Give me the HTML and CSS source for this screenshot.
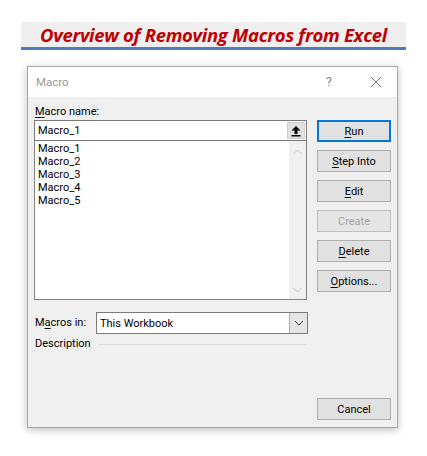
FILE: index.html
```html
<!DOCTYPE html>
<html>
<head>
<meta charset="utf-8">
<link rel="stylesheet" href="styles.css">
</head>
<body>
<div class="banner"><span class="banner-text">Overview of Removing Macros from Excel</span></div>
<div class="dialog">
  <div class="titlebar">
    <span class="title">Macro</span>
    <span class="help">?</span>
    <svg class="close" width="12" height="12" viewBox="0 0 12 12"><path d="M1 1L11 11M11 1L1 11" stroke="#777" stroke-width="1" fill="none"/></svg>
  </div>
  <div class="body">
    <div class="main">
      <div class="leftcol">
        <div class="label"><u>M</u>acro name:</div>
        <div class="input">
          <span class="input-text">Macro_1</span>
          <span class="upbtn"><svg width="12" height="12" viewBox="0 0 12 12"><path d="M6 1L10.5 5.5H7.5V9H4.5V5.5H1.5Z" fill="#000"/><rect x="1.5" y="10" width="9" height="1.5" fill="#000"/></svg></span>
        </div>
        <div class="list">
          <div class="items">
            <div class="item">Macro_1</div>
            <div class="item">Macro_2</div>
            <div class="item">Macro_3</div>
            <div class="item">Macro_4</div>
            <div class="item">Macro_5</div>
          </div>
          <div class="scroll">
            <svg width="9" height="6" viewBox="0 0 9 6"><path d="M0.5 5L4.5 1L8.5 5" stroke="#c2c2c2" fill="none"/></svg>
            <svg width="9" height="6" viewBox="0 0 9 6"><path d="M0.5 1L4.5 5L8.5 1" stroke="#c2c2c2" fill="none"/></svg>
          </div>
        </div>
      </div>
      <div class="buttons">
        <div class="btn primary"><u>R</u>un</div>
        <div class="btn"><u>S</u>tep Into</div>
        <div class="btn"><u>E</u>dit</div>
        <div class="btn disabled">Create</div>
        <div class="btn"><u>D</u>elete</div>
        <div class="btn"><u>O</u>ptions...</div>
      </div>
    </div>
    <div class="macros-row">
      <span class="label">M<u>a</u>cros in:</span>
      <div class="combo">
        <span class="combo-text">This Workbook</span>
        <span class="combo-btn"><svg width="10" height="6" viewBox="0 0 10 6"><path d="M1 1L5 5L9 1" stroke="#333" fill="none"/></svg></span>
      </div>
    </div>
    <div class="desc-row">
      <span class="label">Description</span>
      <span class="rule"></span>
    </div>
    <div class="spacer"></div>
    <div class="footer">
      <div class="btn">Cancel</div>
    </div>
  </div>
</div>
</body>
</html>
```
FILE: styles.css
```css
html, body {
  margin: 0;
  padding: 0;
  background: #fff;
}
body {
  width: 427px;
  height: 456px;
  font-family: Roboto, "Noto Sans", sans-serif;
  font-size: 11px;
  color: #000;
}
.banner {
  margin: 22px 0 0 21px;
  width: 385px;
  height: 25px;
  background: #efefef;
  border-bottom: 3px solid #4f7bbf;
  display: flex;
  align-items: center;
  justify-content: center;
}
.banner-text {
  font-family: "Open Sans", sans-serif;
  font-weight: bold;
  font-style: italic;
  font-size: 18.5px;
  color: #c00000;
  letter-spacing: -0.3px;
}
.dialog {
  margin: 16px 0 0 27px;
  width: 369px;
  height: 360px;
  border: 1px solid #a6a6a6;
  background: #f0f0f0;
  box-shadow: 0 2px 8px rgba(0,0,0,0.25);
  display: flex;
  flex-direction: column;
}
.titlebar {
  height: 30px;
  background: #fff;
  display: flex;
  align-items: center;
  position: relative;
  flex-shrink: 0;
}
.title {
  margin-left: 8px;
  color: #999;
  font-size: 11.5px;
}
.help {
  position: absolute;
  left: 298px;
  top: 7px;
  color: #888;
  font-size: 12.5px;
}
.close {
  position: absolute;
  left: 342px;
  top: 9px;
}
.body {
  flex: 1;
  display: flex;
  flex-direction: column;
  padding: 6px 6px 7px 6px;
}
.main {
  display: flex;
  gap: 10px;
}
.leftcol {
  width: 273px;
  flex-shrink: 0;
  display: flex;
  flex-direction: column;
}
.label {
  height: 16px;
  line-height: 16px;
  padding-left: 1px;
}
.leftcol .label {
  margin-top: 1px;
}
.input {
  height: 19px;
  border: 1px solid #7a7a7a;
  background: #fff;
  display: flex;
  align-items: center;
  justify-content: space-between;
}
.input-text {
  padding-left: 3px;
}
.upbtn {
  width: 18px;
  height: 17px;
  margin-right: 1px;
  background: #e1e1e1;
  border: 1px solid #cfcfcf;
  box-sizing: border-box;
  display: flex;
  align-items: center;
  justify-content: center;
}
.list {
  height: 158px;
  border: 1px solid #828282;
  border-top: none;
  background: #fff;
  display: flex;
}
.items {
  flex: 1;
  padding: 1px 3px;
}
.item {
  height: 13px;
  line-height: 13px;
}
.scroll {
  width: 17px;
  background: #f0f0f0;
  display: flex;
  flex-direction: column;
  justify-content: space-between;
  align-items: center;
  padding: 8px 0 6px;
}
.buttons {
  margin-top: 17px;
  display: flex;
  flex-direction: column;
  gap: 8px;
}
.btn {
  width: 74px;
  height: 22px;
  box-sizing: border-box;
  border: 1px solid #adadad;
  background: #e1e1e1;
  display: flex;
  align-items: center;
  justify-content: center;
  font-size: 11px;
}
.btn.primary {
  border: 2px solid #0078d7;
}
.btn.disabled {
  color: #a3a3a3;
  border-color: #bfbfbf;
  background: #e5e5e5;
}
.macros-row {
  margin-top: 12px;
  display: flex;
  align-items: center;
}
.macros-row .label {
  width: 61px;
}
.combo {
  width: 210px;
  height: 20px;
  border: 1px solid #7a7a7a;
  background: #fff;
  display: flex;
  align-items: center;
  justify-content: space-between;
}
.combo-text {
  padding-left: 3px;
}
.combo-btn {
  width: 17px;
  height: 20px;
  background: #e5e5e5;
  border-left: 1px solid #adadad;
  display: flex;
  align-items: center;
  justify-content: center;
}
.desc-row {
  margin-top: 2px;
  width: 273px;
  display: flex;
  align-items: center;
  height: 16px;
}
.rule {
  margin-left: 8px;
  flex: 1;
  height: 1px;
  background: #dcdcdc;
}
.spacer {
  flex: 1;
}
.footer {
  display: flex;
  justify-content: flex-end;
}
u {
  text-decoration: underline;
  text-underline-offset: 2px;
}
```
